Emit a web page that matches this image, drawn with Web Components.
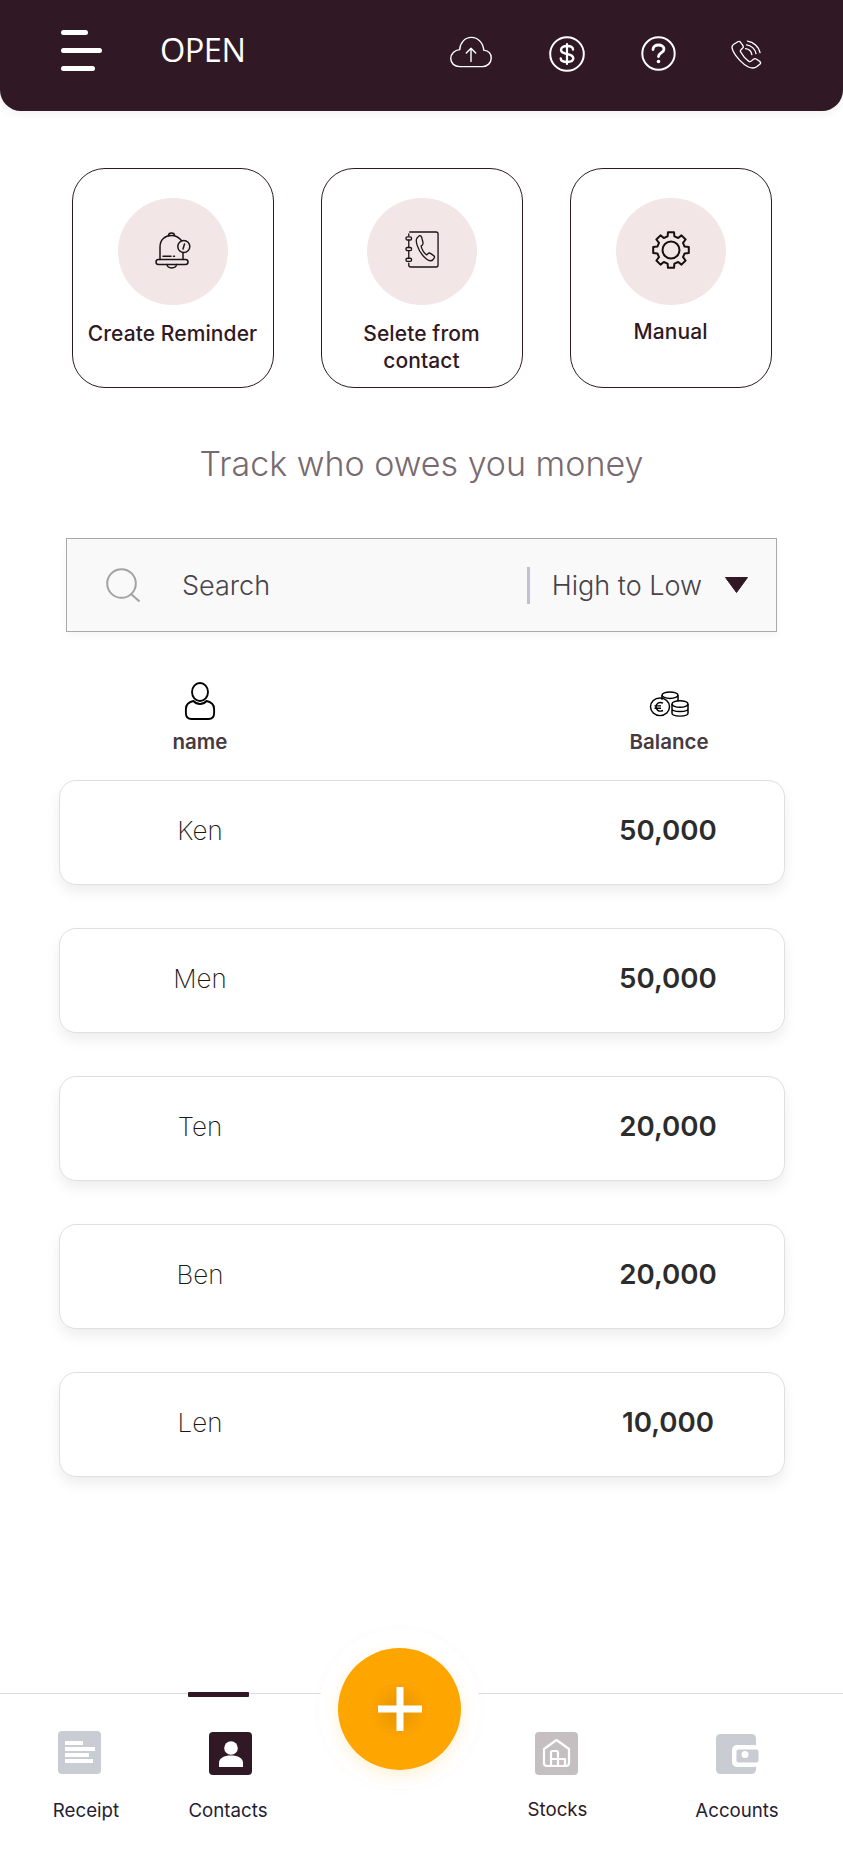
<!DOCTYPE html>
<html><head><meta charset="utf-8">
<style>
html,body{margin:0;padding:0;background:#fff}
body{width:843px;height:1850px;font-family:"Inter","Liberation Sans",sans-serif;overflow:hidden}
</style></head><body>
<app-screen></app-screen>
<script>
const INK='#301924';
function gearPath(){
  const cx=19,cy=19,n=8,ro=18,ri=14;let d='';
  for(let i=0;i<n;i++){
    const a=(i/n)*Math.PI*2-Math.PI/2, w=Math.PI/n;
    const pts=[[ri,a-w*.62],[ro,a-w*.42],[ro,a+w*.42],[ri,a+w*.62]];
    pts.forEach(p=>{d+=(d?'L':'M')+(cx+p[0]*Math.cos(p[1])).toFixed(1)+' '+(cy+p[0]*Math.sin(p[1])).toFixed(1)});
  }
  return d+'Z';
}
const ic={
menu:`<svg width="41" height="41" viewBox="0 0 41 41" fill="#fff"><rect width="27" height="5" rx="2.5"/><rect y="18" width="41" height="5" rx="2.5"/><rect y="36" width="34" height="5" rx="2.5"/></svg>`,
cloud:`<svg width="44" height="32" viewBox="0 0 46 34" fill="none" stroke="#fff" stroke-width="1.5" stroke-linecap="round" stroke-linejoin="round"><path d="M11 32.5H35C40.5 32.5 44.5 28.5 44.5 23.5C44.5 18.5 41 15.5 36.5 15C36 7.5 30.5 1.5 23.5 1.5C16.5 1.5 11.5 7 11 14.5C5.5 15 1.5 19 1.5 24C1.5 29 5.5 32.5 11 32.5Z"/><path d="M23 27V13M18 18L23 13L28 18"/></svg>`,
dollar:`<svg width="36" height="36" viewBox="0 0 36 36" fill="none" stroke="#fff" stroke-linecap="round"><circle cx="18" cy="18" r="16.8" stroke-width="2"/><path d="M24 13.5C24 11 21.500 10 18 10C14.5 10 12 11.500 12 14C12 16.500 14.5 17.300 18 18C21.500 18.700 24.300 19.500 24.300 22.300C24.300 25 21.500 26 18 26C14.5 26 11.700 25 11.700 22.500" stroke-width="2.4"/><path d="M18 8V28" stroke-width="2.2"/></svg>`,
help:`<svg width="35" height="35" viewBox="0 0 35 35" fill="none" stroke="#fff" stroke-linecap="round"><circle cx="17.5" cy="17.5" r="16.2" stroke-width="2"/><path d="M12 13.5C12 10.5 14.5 9 17.5 9C20.5 9 23 10.5 23 13.2C23 16.500 17.500 16.800 17.500 20.500" stroke-width="2.8"/><circle cx="17.5" cy="25.500" r="1.8" fill="#fff" stroke="none"/></svg>`,
phone:`<svg width="31" height="29" viewBox="0 0 32 32" preserveAspectRatio="none" fill="none" stroke="#fff" stroke-width="1.4" stroke-linecap="round" stroke-linejoin="round"><path d="M7 2L2.5 5C0.5 6.5 1 10 2.5 13C5 18.5 12 26.5 17.5 29.5C20.5 31 24 31.5 26.5 29.5L30 26.5C31 25.5 30.5 24.5 29.5 23.5L26 21C25 20.3 24 20.5 23.2 21.3L20.8 23.3C20 24 19 24 18 23.3C14.5 20.5 12 17 10 13.2C9.5 12.2 9.7 11.2 10.5 10.5L12 9C12.8 8.2 12.8 7 12.2 6L9.8 2.5C9 1.5 8 1.4 7 2Z"/><path d="M15 9.5C18.5 10 21 12.5 21.5 16M16 5.3C20.7 5.8 25 10 25.8 15M17 1.3C23 2 29 7.5 30 14"/></svg>`,
bell:`<svg width="36" height="38" viewBox="0 0 36 38" fill="none" stroke="#1d1418" stroke-width="1.5" stroke-linecap="round" stroke-linejoin="round"><path d="M5 28.5V16C5 8.5 10 4.5 16.5 4.5C21 4.5 24 6.5 26.5 9.5"/><path d="M28 21.5V28.5"/><rect x="1" y="28.5" width="32" height="5" rx="2.5"/><path d="M13.5 4.5C13.5 1 19.5 1 19.5 4.5"/><path d="M12 33.5C12.5 38 21 38 21.5 33.5"/><path d="M8 25.3H16M18.5 25.3H19.5"/><circle cx="28.8" cy="15.5" r="6"/><path d="M28 18L29.5 13"/></svg>`,
book:`<svg width="34" height="37" viewBox="0 0 36 38" preserveAspectRatio="none" fill="none" stroke="#1d1418" stroke-width="1.4" stroke-linecap="round" stroke-linejoin="round"><path d="M5 1H33C34 1 35 2 35 3V35C35 36 34 37 33 37H6C5 37 4 36 4 35V33M4 5V3"/><rect x="1" y="6" width="6" height="3.2" rx="1.6"/><rect x="1" y="17" width="6" height="3.2" rx="1.6"/><rect x="1" y="28" width="6" height="3.2" rx="1.6"/><path d="M4 9.500V17M4 20.500V28"/><path d="M15 5L12.500 7.500C11.500 9 12 12 13 15C15 21 19 26 23 29C25 30.500 28 31.500 30 29L31 27.500C31.500 26.500 31 25.500 30 25L27 23C26 22.500 25 22.500 24.300 23.300L23 24.500C20.500 23 18 19 17 15.500L18.500 14.300C19 13.500 19.300 12.500 19 11.500L17.500 6C17 5 16 4.500 15 5Z"/></svg>`,
gear:`<svg width="38" height="38" viewBox="0 0 38 38" fill="none" stroke="#17100f" stroke-width="2" stroke-linejoin="round"><circle cx="19" cy="19" r="8.500"/><path d="${gearPath()}"/></svg>`,
search:`<svg width="34" height="34" viewBox="0 0 34 34" fill="none" stroke="#a3a3a3" stroke-width="2"><circle cx="15.500" cy="15.500" r="14.300"/><path d="M25 26L33.500 33.500"/></svg>`,
user:`<svg width="32" height="38" viewBox="0 0 34 38" preserveAspectRatio="none" fill="none" stroke="#000" stroke-width="2"><ellipse cx="17" cy="10" rx="8.500" ry="9"/><path d="M10 19C5 20 2 23 2 27V31C2 35 4 37 8 37H26C30 37 32 35 32 31V27C32 23 29 20 24 19C20 23 14 23 10 19Z"/></svg>`,
coins:`<svg width="40" height="26" viewBox="0 0 40 28" preserveAspectRatio="none" fill="none" stroke="#000" stroke-width="1.500"><circle cx="11" cy="17" r="9.500"/><path d="M14 13C9.500 11 7 14 7 17C7 20 9.500 23 14 21M5.500 16H12M5.500 18.500H12"/><ellipse cx="21" cy="4.500" rx="8" ry="3.500"/><path d="M13 4.500V9.500M29 4.500V11"/><ellipse cx="31" cy="14" rx="8" ry="3.500"/><path d="M23 14V24C23 28 39 28 39 24V14M23 19C23 23 39 23 39 19"/></svg>`,
receipt:`<svg width="43" height="43" viewBox="0 0 43 43"><rect width="43" height="43" rx="4" fill="#c9ccd3"/><g fill="#fff"><rect x="7" y="10" width="18" height="4"/><rect x="7" y="16" width="30" height="4"/><rect x="7" y="22" width="24" height="4"/><rect x="7" y="28" width="28" height="4"/></g></svg>`,
contact:`<svg width="43" height="43" viewBox="0 0 43 43"><rect width="43" height="43" rx="4" fill="${INK}"/><g fill="#fff"><circle cx="22" cy="16" r="6.800"/><path d="M10 35V31C10 26 15 23.500 22 23.500C29 23.500 34 26 34 31V35Z"/></g></svg>`,
stock:`<svg width="43" height="43" viewBox="0 0 43 43"><rect width="43" height="43" rx="4" fill="#c5bfc2"/><g fill="none" stroke="#fff" stroke-width="2.200" stroke-linejoin="round"><path d="M9 17L21.500 8L34 17V31C34 33 33 34 31 34H12C10 34 9 33 9 31Z"/><path d="M16 34V20.500C16 19.500 16.500 19 17.500 19H21.500C22.500 19 23 19.500 23 20.500V34M16 27H30V34"/></g></svg>`,
wallet:`<svg width="43" height="40" viewBox="0 0 43 40" style="overflow:visible"><rect width="40" height="40" rx="4.500" fill="#c9ccd3"/><rect x="16" y="11" width="27" height="22" rx="5" fill="#fff"/><rect x="20.500" y="15.500" width="22" height="13" rx="2" fill="#c9ccd3"/><circle cx="29" cy="20.500" r="3.500" fill="#fff"/></svg>`,
plus:`<svg width="44" height="44" viewBox="0 0 44 44" fill="#fff"><rect x="18.500" width="7" height="44"/><rect y="18.500" width="44" height="7"/></svg>`,
caret:`<svg width="23" height="16" viewBox="0 0 23 16"><path d="M.5 .5H22.500L11.500 15.500Z" fill="${INK}" stroke="${INK}" stroke-linejoin="round"/></svg>`
};

customElements.define('app-header',class extends HTMLElement{constructor(){super();this.attachShadow({mode:'open'}).innerHTML=`<style>
:host{display:flex;align-items:flex-start;height:111px;box-sizing:border-box;background:${INK};border-radius:0 0 21px 21px;box-shadow:0 3px 8px rgba(0,0,0,.06);color:#fff;padding:30px 0 0 61px}
.t{font:400 32.500px/40px "Open Sans","Liberation Sans",sans-serif;margin-left:58px;width:289px;letter-spacing:-.5px}
.r{display:flex;align-items:flex-start;gap:56px}
svg{display:block}
</style>${ic.menu}<div class="t">OPEN</div><div class="r"><span style="margin-top:6px">${ic.cloud}</span><span style="margin-top:6px">${ic.dollar}</span><span style="margin-top:6px">${ic.help}</span><span style="margin:10px 0 0 -1px">${ic.phone}</span></div>`}});

customElements.define('action-card',class extends HTMLElement{constructor(){super();this.attachShadow({mode:'open'}).innerHTML=`<style>
:host{display:flex;flex-direction:column;align-items:center;box-sizing:border-box;width:202px;height:220px;border:1px solid ${INK};border-radius:33px;padding-top:29px;background:#fff;color:${INK}}
.c{width:110px;height:107px;border-radius:50%;background:#f2e6e6;display:flex;align-items:center;justify-content:center}
.l{margin-top:var(--gap,15px);font:500 21px/var(--lh,28px) "Inter","Liberation Sans",sans-serif;text-align:center;letter-spacing:.1px;white-space:nowrap}
::slotted(span){display:block}
</style><div class="c"><slot name="i"></slot></div><div class="l"><slot></slot></div>`}});

customElements.define('search-bar',class extends HTMLElement{constructor(){super();this.attachShadow({mode:'open'}).innerHTML=`<style>
:host{display:flex;align-items:center;box-sizing:border-box;width:711px;height:94px;margin:0 auto;background:#f9f9f9;border:1px solid #a9a9a9;box-shadow:0 4px 8px rgba(0,0,0,.04);padding-left:39px;font:300 27px "Inter","Liberation Sans",sans-serif;color:#47434a}
svg{display:block}
.s{margin-left:42px;flex:1}
.d{width:3px;height:37px;background:#c1c0d3;margin-right:22px}
.h{margin-right:23px}
.c{margin-right:28px}
</style>${ic.search}<div class="s">Search</div><div class="d"></div><div class="h">High to Low</div><div class="c">${ic.caret}</div>`}});

customElements.define('list-head',class extends HTMLElement{constructor(){super();this.attachShadow({mode:'open'}).innerHTML=`<style>
:host{display:flex;justify-content:space-between;padding:0 99px 0 125px;font:600 20.500px/24px "Inter","Liberation Sans",sans-serif;color:#463a40}
.c{display:flex;flex-direction:column;align-items:center;width:150px}
.ic{height:38px;display:flex;align-items:flex-end;justify-content:center;margin-bottom:10px}
svg{display:block}
</style><div class="c"><div class="ic">${ic.user}</div>name</div><div class="c"><div class="ic"><span style="margin-bottom:3px">${ic.coins}</span></div>Balance</div>`}});

customElements.define('balance-row',class extends HTMLElement{constructor(){super();this.attachShadow({mode:'open'}).innerHTML=`<style>
:host{display:flex;align-items:center;justify-content:space-between;box-sizing:border-box;width:726px;height:105px;background:#fff;border:1px solid #e0e0e0;border-radius:17px;box-shadow:0 7px 14px rgba(0,0,0,.07);padding:0 41px 5px 65px;margin-bottom:43px}
.n{width:150px;text-align:center;font:200 26px "Inter","Liberation Sans",sans-serif;color:#1c181a}
.b{width:150px;text-align:center;font:600 27.700px "Inter","Liberation Sans",sans-serif;color:#2c2c2c}
</style><div class="n">${this.getAttribute('name')}</div><div class="b">${this.getAttribute('amount')}</div>`}});

customElements.define('bottom-nav',class extends HTMLElement{constructor(){super();this.attachShadow({mode:'open'}).innerHTML=`<style>
:host{display:block;position:relative;height:157px;box-sizing:border-box;border-top:1px solid #dcdcdf;background:#fff;font:400 18.700px/24px "Inter","Liberation Sans",sans-serif;color:#1f2233}
.items{display:flex;height:100%}
.it{display:flex;flex-direction:column;align-items:center;padding-top:37px;box-sizing:border-box}
.it svg{display:block}
.ib{height:44px}
.lbl{margin-top:24px}
.bar{position:absolute;left:188px;top:-2px;width:61px;height:5px;background:${INK};border-radius:1px}
.fab{position:absolute;left:338px;top:-46px;width:123px;height:122px;border-radius:50%;background:#ffa500;box-shadow:0 6px 16px rgba(255,165,0,.16),0 0 0 19px #fff,0 0 12px 20px rgba(0,0,0,.018);display:flex;align-items:center;justify-content:center;z-index:1}
.fab::after{content:"";position:absolute;left:31px;top:32px;width:60px;height:60px;border-radius:50%;background:radial-gradient(circle at 50% 50%,rgba(150,100,0,.26),rgba(150,100,0,0) 70%)}
.fab svg{position:relative;z-index:1;display:block}
</style>
<div class="bar"></div><div class="fab">${ic.plus}</div>
<div class="items">
<div class="it" style="width:172px"><div class="ib" style="margin-left:-13px">${ic.receipt}</div><div class="lbl">Receipt</div></div>
<div class="it" style="width:112px"><div class="ib" style="margin-left:5px;padding-top:1px">${ic.contact}</div><div class="lbl" style="margin-top:23px">Contacts</div></div>
<div class="it" style="width:115px;margin-left:216px;color:${INK}"><div class="ib" style="margin-left:-2px;padding-top:1px">${ic.stock}</div><div class="lbl" style="margin-top:22px">Stocks</div></div>
<div class="it" style="width:174px;margin-left:35px"><div class="ib" style="padding-top:3px">${ic.wallet}</div><div class="lbl" style="margin-top:21px">Accounts</div></div>
</div>`}});

customElements.define('app-screen',class extends HTMLElement{constructor(){super();this.attachShadow({mode:'open'}).innerHTML=`<style>
:host{display:flex;flex-direction:column;width:843px;height:1850px;background:#fff}
.cards{display:flex;justify-content:center;gap:47px;margin-top:57px}
h2{margin:56px 0 0;text-align:center;font:300 34px/40px "Inter","Liberation Sans",sans-serif;color:#786a70}
.sb{margin-top:54px}
.hd{margin-top:50px}
.list{margin:26px 0 0 59px}
.sp{flex:1}
</style>
<app-header></app-header>
<div class="cards">
<action-card><span slot="i">${ic.bell}</span>Create Reminder</action-card>
<action-card style="--gap:15px;--lh:27px"><span slot="i">${ic.book}</span>Selete from<br>contact</action-card>
<action-card style="--gap:13px"><span slot="i">${ic.gear}</span>Manual</action-card>
</div>
<h2>Track who owes you money</h2>
<search-bar class="sb"></search-bar>
<list-head class="hd"></list-head>
<div class="list">
<balance-row name="Ken" amount="50,000"></balance-row>
<balance-row name="Men" amount="50,000"></balance-row>
<balance-row name="Ten" amount="20,000"></balance-row>
<balance-row name="Ben" amount="20,000"></balance-row>
<balance-row name="Len" amount="10,000"></balance-row>
</div>
<div class="sp"></div>
<bottom-nav></bottom-nav>`}});
</script>
</body></html>
